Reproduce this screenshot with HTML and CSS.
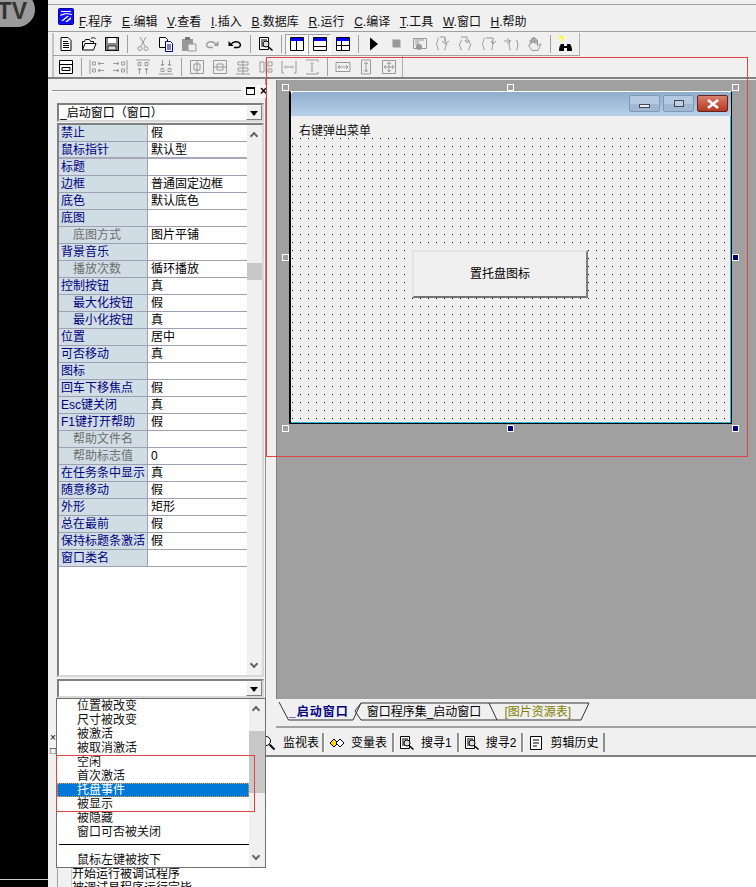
FILE: index.html
```html
<!DOCTYPE html>
<html lang="en">
<head>
    <meta charset="UTF-8">
    <meta name="viewport" content="width=device-width, initial-scale=1.0">
    <title>易语言</title>
    <link rel="stylesheet" href="styles.css">
</head>
<body>
    <svg class="defs" xmlns="http://www.w3.org/2000/svg">
        <symbol id="new" viewBox="0 0 16 16"><path d="M3 1.500h7l3 3v10H3zM5 5.500h5M5 7.500h6M5 9.500h6M5 11.500h6" fill="#fff" stroke="#000"/></symbol>
        <symbol id="open" viewBox="0 0 16 16"><path d="M1.500 14V5.500h2l1-2h4l1 2h3v2M1.500 14l2.500-6.500h11L12.500 14zM10 2.500c2-1.500 3.500-1 4.500.5" fill="#fff" stroke="#000"/></symbol>
        <symbol id="save" viewBox="0 0 16 16"><path d="M1.500 1.500h13v13h-13z" fill="#888" stroke="#000"/><path d="M4 2h8v5H4z" fill="#fff"/><path d="M4 10h8v4H4z" fill="#ddd" stroke="#333"/></symbol>
        <symbol id="cut" viewBox="0 0 16 16"><path d="M5 1l5 9M11 1l-5 9" fill="none" stroke="#999"/><circle cx="5" cy="12.500" r="2" fill="none" stroke="#999"/><circle cx="11" cy="12.500" r="2" fill="none" stroke="#999"/></symbol>
        <symbol id="copy" viewBox="0 0 16 16"><path d="M1.500 1.500h6l2 2v8h-8z" fill="#fff" stroke="#000"/><path d="M7.500 5.500h5l2 2v8h-7z" fill="#fff" stroke="#000080"/><path d="M9 9h4M9 11h4M9 13h4" stroke="#000080"/></symbol>
        <symbol id="paste" viewBox="0 0 16 16"><path d="M1 3h11v12H1z" fill="#999"/><path d="M4 1h5v3H4z" fill="#777"/><path d="M7 8h8v7H7z" fill="#eee" stroke="#999"/></symbol>
        <symbol id="redo" viewBox="0 0 16 16"><path d="M12 8.500C10 5 5 5 3 7.500c-1 2 0 3.500 2 4h4" fill="none" stroke="#999" stroke-width="1.500"/><path d="M14.500 5v5h-5z" fill="#999"/></symbol>
        <symbol id="undo" viewBox="0 0 16 16"><path d="M4 8.500C6 5 11 5 13 7.500c1 2 0 3.500-2 4H7" fill="none" stroke="#000" stroke-width="1.500"/><path d="M1.500 5v5h5z"/></symbol>
        <symbol id="find" viewBox="0 0 16 16"><path d="M1.500 1.500h9v12h-9z" fill="#fff" stroke="#000"/><path d="M3 4h6M3 6h2M3 8h2M3 10h6" stroke="#000"/><circle cx="8" cy="8" r="3" fill="#ddd" stroke="#000"/><path d="M10 10.500l4.500 4" stroke="#000" stroke-width="1.500"/></symbol>
        <symbol id="lens" viewBox="0 0 16 16"><circle cx="6" cy="6" r="4.500" fill="#fff" stroke="#000"/><path d="M9.500 9.500l5 5" stroke="#000" stroke-width="2"/></symbol>
        <symbol id="lay1" viewBox="0 0 16 16"><path d="M1.500 1.500h13v13h-13z" fill="#fff" stroke="#000"/><path d="M2 2h12v3H2z" fill="#00f"/><path d="M7.500 5v9" stroke="#000"/></symbol>
        <symbol id="lay2" viewBox="0 0 16 16"><path d="M1.500 1.500h13v13h-13z" fill="#fff" stroke="#000"/><path d="M2 2h12v3H2z" fill="#00f"/><path d="M2 10.500h12" stroke="#000"/></symbol>
        <symbol id="lay3" viewBox="0 0 16 16"><path d="M1.500 1.500h13v13h-13z" fill="#fff" stroke="#000"/><path d="M2 2h12v3H2z" fill="#00f"/><path d="M6.500 5v9M2 9.500h12" stroke="#000"/></symbol>
        <symbol id="play" viewBox="0 0 16 16"><path d="M4 1.500l8 6.500-8 6.500z"/></symbol>
        <symbol id="stop" viewBox="0 0 16 16"><path d="M3.500 3.500h8v8h-8z" fill="#999"/></symbol>
        <symbol id="watch" viewBox="0 0 16 16"><path d="M1.500 2.500h13v10h-13z" fill="#eee" stroke="#999"/><path d="M3 4h9M3 6h4M3 8h4" stroke="#999"/><circle cx="7" cy="11" r="3" fill="#999"/></symbol>
        <symbol id="step1" viewBox="0 0 16 16"><path d="M4 2c-2 0-1 5-3 6 2 1 1 6 3 6M9 2c2 0 1 5 3 6-2 1-1 6-3 6M5 1h5v5M14 5l-4 3-3-3" fill="none" stroke="#999"/></symbol>
        <symbol id="step2" viewBox="0 0 16 16"><path d="M4 4c-2 0-1 4-3 5 2 1 1 5 3 5M10 4c2 0 1 4 3 5-2 1-1 5-3 5M3 1h6v4M7 4l2 3 2-3" fill="none" stroke="#999"/></symbol>
        <symbol id="step3" viewBox="0 0 16 16"><path d="M4 2c-2 0-1 5-3 6 2 1 1 6 3 6M10 5c2 0 1 3 2 3-1 1 0 6-2 6M5 2h7v5M10 5l2 3 3-3" fill="none" stroke="#999"/></symbol>
        <symbol id="step4" viewBox="0 0 16 16"><path d="M7 4c-2 0-1 4-2 5 1 1 0 5 2 5M12 4c2 0 1 4 2 5-1 1 0 5-2 5M0 5h6M3 2l3 3-3 3" fill="none" stroke="#999"/></symbol>
        <symbol id="hand" viewBox="0 0 16 16"><path d="M3 8V4.500h1.500V8V2.500H6V7V1.500h1.500V7V2.500H9V8V4h1.500v6l2-2h1.500l-3 6.500H5L1.500 9.500 3 9z" fill="#eee" stroke="#999"/></symbol>
        <symbol id="glass" viewBox="0 0 16 16"><path d="M1 15c0-4 1-6 2-7h3v7zM9 15V8h3c1 1 2 3 2 7z"/><path d="M6 10h3v2H6z"/><path d="M1 2c0-2 4-2 4 0 0 2-2 1.500-2 3.500" fill="none" stroke="#ff0" stroke-width="1.500"/></symbol>
        <symbol id="form" viewBox="0 0 16 16"><path d="M1.500 1.500h13v13h-13zM1.500 5.500h13M4 8.500h8v3H4z" fill="#fff" stroke="#000"/></symbol>
        <symbol id="al1" viewBox="0 0 16 16"><path d="M1 1v14M3.500 3h3v3h-3zM3.500 10h3v3h-3zM15 4.500H9M11 3L9 4.500 11 6M15 11.500H9M11 10l-2 1.500L11 13" fill="none" stroke="#999"/></symbol>
        <symbol id="al2" viewBox="0 0 16 16"><path d="M15 1v14M9.500 3h3v3h-3zM9.500 10h3v3h-3zM1 4.500h6M5 3l2 1.500L5 6M1 11.500h6M5 10l2 1.500L5 13" fill="none" stroke="#999"/></symbol>
        <symbol id="al3" viewBox="0 0 16 16"><path d="M1 1h14M3 3.500h3v3H3zM10 3.500h3v3h-3zM4.500 15V9M3 11l1.500-2L6 11M11.500 15V9M10 11l1.500-2 1.500 2" fill="none" stroke="#999"/></symbol>
        <symbol id="al4" viewBox="0 0 16 16"><path d="M1 15h14M3 9.500h3v3H3zM10 9.500h3v3h-3zM4.500 1v6M3 5l1.500 2L6 5M11.500 1v6M10 5l1.500 2L13 5" fill="none" stroke="#999"/></symbol>
        <symbol id="ce1" viewBox="0 0 16 16"><path d="M1.500 1.500h13v13h-13zM8 1v14M5 5h6v6H5z" fill="none" stroke="#999"/></symbol>
        <symbol id="ce2" viewBox="0 0 16 16"><path d="M1.500 1.500h13v13h-13zM1 8h14M5 5h6v6H5z" fill="none" stroke="#999"/></symbol>
        <symbol id="ce3" viewBox="0 0 16 16"><path d="M1 15h14M8 1v14M3 3h10v3H3zM3 9h10v3H3z" fill="none" stroke="#999"/></symbol>
        <symbol id="ce4" viewBox="0 0 16 16"><path d="M8 1v14M2 3v10h4V3zM10 3v4h4V3zM10 10v3h4v-3z" fill="none" stroke="#999"/></symbol>
        <symbol id="sp1" viewBox="0 0 16 16"><path d="M1 2v12h2M15 2v12h-2M5 8h6M5 6.500L3.500 8 5 9.500M11 6.500L12.500 8 11 9.500" fill="none" stroke="#999"/></symbol>
        <symbol id="sp2" viewBox="0 0 16 16"><path d="M2 1h12v2M2 15h12v-2M8 5v6M6.500 5L8 3.500 9.500 5M6.500 11L8 12.500 9.500 11" fill="none" stroke="#999"/></symbol>
        <symbol id="sz1" viewBox="0 0 16 16"><path d="M1 3.500h14v9H1zM3 8h10M5 6L3 8l2 2M11 6l2 2-2 2" fill="none" stroke="#999"/></symbol>
        <symbol id="sz2" viewBox="0 0 16 16"><path d="M3.500 1h9v14h-9zM8 3v10M6 5l2-2 2 2M6 11l2 2 2-2" fill="none" stroke="#999"/></symbol>
        <symbol id="sz3" viewBox="0 0 16 16"><path d="M1.500 1.500h13v13h-13zM3 8h10M8 3v10M5 6L3 8l2 2M11 6l2 2-2 2M6 5l2-2 2 2M6 11l2 2 2-2" fill="none" stroke="#999"/></symbol>
        <symbol id="var" viewBox="0 0 16 16"><path d="M1 8l4-4 4 4-4 4z" fill="#ffd800" stroke="#000"/><path d="M7 8l4-4 4 4-4 4z" fill="#fff" stroke="#000"/></symbol>
        <symbol id="clip" viewBox="0 0 16 16"><path d="M2.500 1.500h11v13h-11zM5 5h6M5 8h6M5 11h4" fill="#fff" stroke="#000"/></symbol>
    </svg>

    <div class="tv">TV</div>
    <div class="black-col"><div class="black-line"></div></div>

    <div class="app">
        <div class="menubar">
            <svg class="logo" width="16" height="17" viewBox="0 0 16 17"><rect x="0.500" y="0.500" width="15" height="16" rx="1" fill="#1010f0" stroke="#0000a0"/><path d="M3 3h10v1H3zM2 7c3-2 8-2 12-1v1c-4-1-8-1-11 1zM3 13l6-5h2l-6 5zM7 14l6-5v2l-4 3z" fill="#fff"/></svg>
            <span class="menu"><u>F</u>.程序</span>
            <span class="menu"><u>E</u>.编辑</span>
            <span class="menu"><u>V</u>.查看</span>
            <span class="menu"><u>I</u>.插入</span>
            <span class="menu"><u>B</u>.数据库</span>
            <span class="menu"><u>R</u>.运行</span>
            <span class="menu"><u>C</u>.编译</span>
            <span class="menu"><u>T</u>.工具</span>
            <span class="menu"><u>W</u>.窗口</span>
            <span class="menu"><u>H</u>.帮助</span>
        </div>

        <div class="toolrow row1">
            <div class="toolbar">
                <span class="btn"><svg><use href="#new"/></svg></span>
                <span class="btn"><svg><use href="#open"/></svg></span>
                <span class="btn"><svg><use href="#save"/></svg></span>
                <span class="sep"></span>
                <span class="btn"><svg><use href="#cut"/></svg></span>
                <span class="btn"><svg><use href="#copy"/></svg></span>
                <span class="btn"><svg><use href="#paste"/></svg></span>
                <span class="btn"><svg><use href="#redo"/></svg></span>
                <span class="btn"><svg><use href="#undo"/></svg></span>
                <span class="sep"></span>
                <span class="btn"><svg><use href="#find"/></svg></span>
                <span class="sep"></span>
                <span class="btn pressed"><svg><use href="#lay1"/></svg></span>
                <span class="btn pressed"><svg><use href="#lay2"/></svg></span>
                <span class="btn"><svg><use href="#lay3"/></svg></span>
                <span class="sep"></span>
                <span class="btn"><svg><use href="#play"/></svg></span>
                <span class="btn"><svg><use href="#stop"/></svg></span>
                <span class="btn"><svg><use href="#watch"/></svg></span>
                <span class="btn"><svg><use href="#step1"/></svg></span>
                <span class="btn"><svg><use href="#step2"/></svg></span>
                <span class="btn"><svg><use href="#step3"/></svg></span>
                <span class="btn"><svg><use href="#step4"/></svg></span>
                <span class="btn"><svg><use href="#hand"/></svg></span>
                <span class="sep"></span>
                <span class="btn"><svg><use href="#glass"/></svg></span>
            </div>
        </div>

        <div class="toolrow row2">
            <div class="toolbar">
                <span class="btn"><svg><use href="#form"/></svg></span>
                <span class="sep"></span>
                <span class="btn"><svg><use href="#al1"/></svg></span>
                <span class="btn"><svg><use href="#al2"/></svg></span>
                <span class="btn"><svg><use href="#al3"/></svg></span>
                <span class="btn"><svg><use href="#al4"/></svg></span>
                <span class="sep"></span>
                <span class="btn"><svg><use href="#ce1"/></svg></span>
                <span class="btn"><svg><use href="#ce2"/></svg></span>
                <span class="btn"><svg><use href="#ce3"/></svg></span>
                <span class="btn"><svg><use href="#ce4"/></svg></span>
                <span class="btn"><svg><use href="#sp1"/></svg></span>
                <span class="btn"><svg><use href="#sp2"/></svg></span>
                <span class="sep"></span>
                <span class="btn"><svg><use href="#sz1"/></svg></span>
                <span class="btn"><svg><use href="#sz2"/></svg></span>
                <span class="btn"><svg><use href="#sz3"/></svg></span>
            </div>
        </div>

        <div class="workspace">
            <div class="panel">
                <div class="panel-head">
                    <div class="panel-rule"></div>
                    <span class="panel-btn"><i class="panel-box"></i></span>
                    <span class="panel-btn">×</span>
                </div>
                <div class="combo">
                    <span class="combo-text">_启动窗口（窗口）</span>
                    <span class="combo-arrow"></span>
                </div>
                <div class="props">
                    <div class="prop-list">
                        <div class="prop"><span class="name">禁止</span><span class="value">假</span></div>
                        <div class="prop thick"><span class="name">鼠标指针</span><span class="value">默认型</span></div>
                        <div class="prop"><span class="name">标题</span><span class="value"></span></div>
                        <div class="prop"><span class="name">边框</span><span class="value">普通固定边框</span></div>
                        <div class="prop"><span class="name">底色</span><span class="value">默认底色</span></div>
                        <div class="prop"><span class="name">底图</span><span class="value"></span></div>
                        <div class="prop"><span class="name sub off">底图方式</span><span class="value">图片平铺</span></div>
                        <div class="prop"><span class="name">背景音乐</span><span class="value"></span></div>
                        <div class="prop"><span class="name sub off">播放次数</span><span class="value">循环播放</span></div>
                        <div class="prop"><span class="name">控制按钮</span><span class="value">真</span></div>
                        <div class="prop"><span class="name sub">最大化按钮</span><span class="value">假</span></div>
                        <div class="prop"><span class="name sub">最小化按钮</span><span class="value">真</span></div>
                        <div class="prop"><span class="name">位置</span><span class="value">居中</span></div>
                        <div class="prop"><span class="name">可否移动</span><span class="value">真</span></div>
                        <div class="prop"><span class="name">图标</span><span class="value"></span></div>
                        <div class="prop"><span class="name">回车下移焦点</span><span class="value">假</span></div>
                        <div class="prop"><span class="name">Esc键关闭</span><span class="value">真</span></div>
                        <div class="prop"><span class="name">F1键打开帮助</span><span class="value">假</span></div>
                        <div class="prop"><span class="name sub off">帮助文件名</span><span class="value"></span></div>
                        <div class="prop"><span class="name sub off">帮助标志值</span><span class="value">0</span></div>
                        <div class="prop"><span class="name">在任务条中显示</span><span class="value">真</span></div>
                        <div class="prop"><span class="name">随意移动</span><span class="value">假</span></div>
                        <div class="prop"><span class="name">外形</span><span class="value">矩形</span></div>
                        <div class="prop"><span class="name">总在最前</span><span class="value">假</span></div>
                        <div class="prop"><span class="name">保持标题条激活</span><span class="value">假</span></div>
                        <div class="prop"><span class="name">窗口类名</span><span class="value"></span></div>
                    </div>
                    <div class="scroll">
                        <span class="chev up"></span>
                        <span class="thumb"></span>
                        <span class="chev down"></span>
                    </div>
                </div>
                <div class="combo lower">
                    <span class="combo-text"></span>
                    <span class="combo-arrow"></span>
                </div>
            </div>

            <div class="right-col">
                <div class="designer">
                    <div class="form">
                        <div class="titlebar">
                            <span class="cap"><i class="cap-min"></i></span>
                            <span class="cap"><i class="cap-max"></i></span>
                            <span class="cap close"><svg width="14" height="10" viewBox="0 0 14 10"><path d="M2 1l10 8M12 1L2 9" stroke="#fff" stroke-width="2.500"/></svg></span>
                        </div>
                        <div class="form-body">
                            <div class="form-label">右键弹出菜单</div>
                            <div class="form-button">置托盘图标</div>
                        </div>
                    </div>
                    <span class="handle h-tl"></span>
                    <span class="handle h-tc"></span>
                    <span class="handle h-tr"></span>
                    <span class="handle h-ml"></span>
                    <span class="handle on h-mr"></span>
                    <span class="handle h-bl"></span>
                    <span class="handle on h-bc"></span>
                    <span class="handle on h-br"></span>
                </div>
                <div class="doc-tabs">
                    <svg class="doc-shape" width="320" height="20" viewBox="0 0 320 20"><path d="M1 0l9.500 18H75l8-17-6 8 6 9h136h84l8-17H83M211 1l8 17" fill="none" stroke="#333"/></svg>
                    <span class="doc-tab active">_启动窗口</span>
                    <span class="doc-tab second">窗口程序集_启动窗口</span>
                    <span class="doc-tab third">[图片资源表]</span>
                </div>
            </div>
        </div>

        <div class="bottom">
            <div class="bottom-side">
                <span class="mini">×</span>
                <span class="mini">□</span>
            </div>
            <div class="bottom-main">
                <div class="tool-tabs">
                    <span class="tool-tab first"><svg><use href="#lens"/></svg>监视表</span>
                    <span class="tool-tab"><svg><use href="#var"/></svg>变量表</span>
                    <span class="tool-tab"><svg><use href="#find"/></svg>搜寻1</span>
                    <span class="tool-tab"><svg><use href="#find"/></svg>搜寻2</span>
                    <span class="tool-tab"><svg><use href="#clip"/></svg>剪辑历史</span>
                </div>
                <div class="output">
                    <div class="gutter"></div>
                    <div class="log">
                        <div>开始运行被调试程序</div>
                        <div>被调试易程序运行完毕</div>
                    </div>
                </div>
            </div>
        </div>
    </div>

    <div class="dropdown">
        <div class="drop-list">
            <div class="item">位置被改变</div>
            <div class="item">尺寸被改变</div>
            <div class="item">被激活</div>
            <div class="item">被取消激活</div>
            <div class="item">空闲</div>
            <div class="item">首次激活</div>
            <div class="item selected">托盘事件</div>
            <div class="item">被显示</div>
            <div class="item">被隐藏</div>
            <div class="item">窗口可否被关闭</div>
            <div class="item divider"></div>
            <div class="item">鼠标左键被按下</div>
        </div>
        <div class="scroll drop-scroll">
            <span class="chev up"></span>
            <span class="thumb"></span>
            <span class="chev down"></span>
        </div>
    </div>

    <div class="mark mark-form"></div>
    <div class="mark mark-list"></div>
</body>
</html>
```

FILE: styles.css
```css
html, body {
    margin: 0;
    height: 100%;
}

body {
    position: relative;
    width: 756px;
    height: 887px;
    overflow: hidden;
    display: flex;
    background: #000;
    color: #000;
    font-family: "Liberation Sans", "Noto Sans CJK SC", sans-serif;
    font-size: 12px;
    line-height: 14px;
}

.defs {
    display: none;
}

.black-col {
    width: 48px;
    flex: none;
    background: #000;
    padding-top: 879px;
    box-sizing: border-box;
}

.black-line {
    height: 1px;
    background: #ccc;
}

.tv {
    position: absolute;
    left: -20px;
    top: -8px;
    width: 55px;
    height: 35px;
    border-radius: 0 18px 18px 0;
    background: #9a9a9a;
    color: #333;
    font-size: 23px;
    font-weight: bold;
    line-height: 38px;
    text-align: right;
    padding-right: 8px;
    box-sizing: border-box;
}

.app {
    width: 708px;
    height: 887px;
    flex: none;
    display: flex;
    flex-direction: column;
    background: #f0f0f0;
}

/* menu and toolbars */
.menubar {
    height: 28px;
    margin-top: 4px;
    flex: none;
    box-sizing: border-box;
    border-top: 1px solid #a0a0a0;
    border-bottom: 1px solid #a0a0a0;
    display: flex;
    align-items: center;
    padding: 7px 0 0 10px;
}

.logo {
    margin: -10px 5px 0 0;
    flex: none;
}

.menu {
    margin-right: 9.700px;
    white-space: nowrap;
    color: #111;
}

.toolrow {
    flex: none;
    box-sizing: border-box;
}

.row1 {
    height: 24px;
    padding-top: 1px;
}

.row2 {
    height: 23px;
    border-bottom: 2px solid #808080;
}

.toolbar {
    display: inline-flex;
    align-items: center;
    height: 22px;
    padding-right: 2px;
    border-right: 1px solid #b0b0b0;
    border-bottom: 1px solid #a0a0a0;
    border-left: 2px solid #c4c4c4;
    margin-left: 4px;
}

.row2 .toolbar {
    border-bottom: 0;
    height: 21px;
}

.btn {
    width: 23px;
    height: 21px;
    box-sizing: border-box;
    display: flex;
    align-items: center;
    justify-content: center;
    flex: none;
}

.btn svg {
    width: 16px;
    height: 16px;
}

.pressed {
    background: #f8f8f8;
    border: 1px solid;
    border-color: #a0a0a0 #fff #fff #a0a0a0;
}

.sep {
    width: 8px;
    height: 18px;
    flex: none;
    box-sizing: border-box;
    border-right: 1px solid #a0a0a0;
    transform: translateX(-3px);
}

/* workspace */
.workspace {
    height: 649px;
    flex: none;
    display: flex;
}

.panel {
    width: 218px;
    flex: none;
    box-sizing: border-box;
    padding: 0 2px 0 9px;
    border-right: 1px solid #909090;
    background: #f0f0f0;
}

.panel-head {
    height: 24px;
    display: flex;
    align-items: center;
    margin-left: -5px;
}

.panel-rule {
    width: 189px;
    flex: none;
    border-top: 1px solid #909090;
    border-bottom: 1px solid #fff;
    margin-right: 3px;
}

.panel-btn {
    width: 13px;
    height: 13px;
    flex: none;
    font-size: 12px;
    font-weight: bold;
    line-height: 13px;
    text-align: center;
    display: flex;
    align-items: center;
    justify-content: center;
    background: #f8f8f8;
}

.panel-box {
    width: 7px;
    height: 5px;
    border: 1px solid #000;
    border-top-width: 2px;
}

.combo {
    height: 19px;
    width: 207px;
    box-sizing: border-box;
    display: flex;
    background: #fff;
    border: 2px solid;
    border-color: #808080 #d8d8d8 #d8d8d8 #808080;
}

.combo-text {
    flex: 1;
    padding-left: 1px;
    line-height: 16px;
    white-space: nowrap;
}

.combo-arrow {
    width: 16px;
    background: #f0f0f0;
    box-sizing: border-box;
    border: 1px solid;
    border-color: #fff #808080 #808080 #fff;
    position: relative;
}

.combo-arrow::after {
    content: "";
    position: absolute;
    left: 3px;
    top: 5px;
    border: 4px solid transparent;
    border-top: 5px solid #000;
    border-bottom: 0;
}

.lower {
    margin-top: 2px;
}

.props {
    height: 554px;
    width: 207px;
    margin-top: 1px;
    box-sizing: border-box;
    border: 2px solid;
    border-color: #808080 #d8d8d8 #d8d8d8 #808080;
    background: #fff;
    display: flex;
}

.prop-list {
    width: 188px;
    flex: none;
}

.prop {
    height: 17px;
    box-sizing: border-box;
    display: flex;
    border-bottom: 1px solid #a0a0b4;
}

.prop.thick {
    border-bottom-width: 2px;
    border-bottom-color: #a8a8bc;
}

.name {
    width: 89px;
    flex: none;
    box-sizing: border-box;
    padding-left: 2px;
    background: #d0dde4;
    border-right: 1px solid #a0a0b4;
    color: #000080;
    line-height: 17px;
    white-space: nowrap;
    overflow: hidden;
}

.name.sub {
    padding-left: 14px;
}

.name.off {
    color: #6e6e6e;
}

.value {
    padding-left: 3px;
    line-height: 17px;
}

.scroll {
    width: 15px;
    margin-left: auto;
    background: #f0f0f0;
    position: relative;
    flex: none;
}

.thumb {
    position: absolute;
    left: 0;
    top: 138px;
    width: 15px;
    height: 17px;
    background: #c8c8c8;
}

.chev {
    position: absolute;
    left: 4px;
    width: 6px;
    height: 6px;
    box-sizing: border-box;
    border: solid #666;
    border-width: 2px 0 0 2px;
}

.chev.up {
    top: 8px;
    transform: rotate(45deg);
}

.chev.down {
    bottom: 8px;
    transform: rotate(225deg);
}

.right-col {
    flex: 1;
    min-width: 0;
    display: flex;
    flex-direction: column;
    margin-left: 11px;
}

.designer {
    position: relative;
    height: 619px;
    flex: none;
    margin-top: 1px;
    padding: 11px 0 0 12px;
    box-sizing: border-box;
    background: #a0a0a0;
    border-left: 1px solid #808080;
    margin-left: -1px;
}

.form {
    width: 443px;
    height: 333px;
    box-sizing: border-box;
    border: 1px solid #000;
    border-left-width: 2px;
    border-top: 1px solid #fff;
    display: flex;
    flex-direction: column;
    background: #f0f0f0;
    box-shadow: inset -1px 0 0 #29b6e0;
}

.titlebar {
    height: 24px;
    flex: none;
    display: flex;
    justify-content: flex-end;
    align-items: flex-start;
    gap: 3px;
    padding: 3px 3px 0 0;
    box-sizing: border-box;
    background: linear-gradient(#8fadcb, #b8d0e9);
    border-radius: 4px 4px 0 0;
}

.cap {
    width: 31px;
    height: 17px;
    box-sizing: border-box;
    display: flex;
    align-items: center;
    justify-content: center;
    border: 1px solid #7f98b8;
    border-radius: 2px;
    background: linear-gradient(#b4cae2 50%, #a0b8d4 50%);
}

.cap-min {
    width: 9px;
    height: 2px;
    margin-top: 4px;
    background: #eee;
    border: 1px solid #445;
}

.cap-max {
    width: 8px;
    height: 5px;
    background: #c0d0e0;
    border: 1px solid #445;
}

.cap.close {
    background: linear-gradient(#d88070, #c85a44 50%, #b03a24);
    border-color: #6a2020;
}

.form-body {
    flex: 1;
    position: relative;
    background-color: #f0f0f0;
    background-image: url("data:image/svg+xml,%3Csvg xmlns='http://www.w3.org/2000/svg' width='8' height='8'%3E%3Crect x='1' y='6' width='1' height='1'/%3E%3C/svg%3E");
    border-right: 1px solid #29b6e0;
    border-bottom: 1px solid #29b6e0;
}

.form-label {
    height: 13px;
    padding: 8px 0 0 8px;
    background: #f0f0f0;
    color: #111;
}

.form-button {
    position: absolute;
    left: 121px;
    top: 134px;
    width: 176px;
    height: 48px;
    box-sizing: border-box;
    background: #f0f0f0;
    border: 2px solid;
    border-color: #e4e4e4 #808080 #707070 #e4e4e4;
    text-align: center;
    line-height: 44px;
}

.handle {
    position: absolute;
    width: 5px;
    height: 5px;
    background: #a0a0a0;
    border: 1px solid #fff;
}

.handle.on {
    background: #000080;
}

.h-tl { left: 5px; top: 4px; }
.h-tc { left: 230px; top: 4px; }
.h-tr { left: 455px; top: 4px; }
.h-ml { left: 5px; top: 174px; }
.h-mr { left: 455px; top: 174px; }
.h-bl { left: 5px; top: 345px; }
.h-bc { left: 230px; top: 345px; }
.h-br { left: 455px; top: 345px; }

.doc-tabs {
    position: relative;
    height: 29px;
    flex: none;
    box-sizing: border-box;
    border-bottom: 2px solid #a0a0a0;
    display: flex;
    margin-left: -1px;
}

.doc-shape {
    position: absolute;
    left: 2px;
    top: 3px;
}

.doc-tab {
    white-space: nowrap;
    margin-top: 6px;
}

.doc-tab.active {
    margin-left: 13px;
    font-weight: bold;
    letter-spacing: 1px;
    color: #000080;
}

.doc-tab.second {
    margin-left: 18px;
}

.doc-tab.third {
    margin-left: 23px;
    color: #808000;
}

/* bottom panes */
.bottom {
    flex: 1;
    min-height: 0;
    display: flex;
}

.bottom-side {
    width: 9px;
    flex: none;
    padding: 3px 0 0 2px;
    box-sizing: border-box;
    font-size: 10px;
}

.mini {
    display: block;
    height: 13px;
    line-height: 13px;
}

.bottom-main {
    flex: 1;
    min-width: 0;
    display: flex;
    flex-direction: column;
}

.tool-tabs {
    height: 29px;
    flex: none;
    box-sizing: border-box;
    border-bottom: 2px solid #808080;
    display: flex;
    padding: 5px 0 0 203px;
}

.tool-tab {
    height: 19px;
    display: flex;
    align-items: center;
    gap: 6px;
    padding: 0 5px 0 4px;
    white-space: nowrap;
    border-right: 2px solid #909090;
    border-left: 1px solid #fff;
}

.tool-tab.first {
    border-left: 0;
    padding: 0 3px 0 0;
    gap: 7px;
}

.tool-tab svg {
    width: 16px;
    height: 16px;
    flex: none;
}

.output {
    flex: 1;
    display: flex;
    background: #fff;
    min-height: 0;
    overflow: hidden;
}

.gutter {
    width: 13px;
    flex: none;
    background: #f0f0f0;
    border-left: 1px solid #a0a0a0;
    border-right: 1px solid #d0d0d0;
}

.log {
    padding: 110px 0 0 0;
}

/* event dropdown over the panel */
.dropdown {
    position: absolute;
    left: 56px;
    top: 698px;
    width: 210px;
    height: 170px;
    box-sizing: border-box;
    background: #fff;
    border: 1px solid #707070;
    display: flex;
}

.drop-list {
    flex: 1;
    min-width: 0;
}

.item {
    height: 14px;
    padding-left: 20px;
    line-height: 14px;
    white-space: nowrap;
    color: #111;
}

.item.selected {
    background: #0078d7;
    color: #fff;
    outline: 1px dotted #f0a040;
    outline-offset: -1px;
}

.item.divider {
    position: relative;
}

.item.divider::after {
    content: "";
    position: absolute;
    left: 2px;
    right: 0;
    top: 5px;
    border-top: 1px solid #000;
}

.drop-scroll {
    width: 16px;
}

.drop-scroll .thumb {
    top: 32px;
    width: 16px;
    height: 62px;
}

/* red marks drawn on the screenshot */
.mark {
    position: absolute;
    box-sizing: border-box;
    border: 1px solid #e04444;
    pointer-events: none;
}

.mark-form {
    left: 266px;
    top: 57px;
    width: 482px;
    height: 400px;
}

.mark-list {
    left: 56px;
    top: 755px;
    width: 199px;
    height: 57px;
}
```
